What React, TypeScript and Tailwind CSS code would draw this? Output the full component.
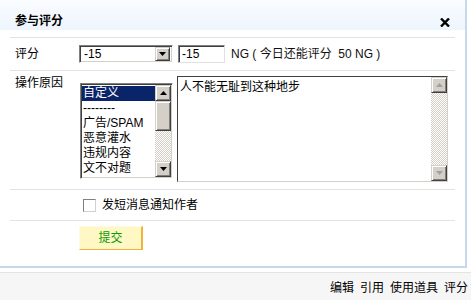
import React from "react";

const font = "font-['Liberation_Sans','Noto_Sans_CJK_SC',sans-serif]";

const Arrow = ({ dir, disabled }: { dir: "up" | "down"; disabled?: boolean }) => (
  <svg width="7" height="4" viewBox="0 0 7 4" className="block">
    {dir === "up" ? (
      <polygon points="3.5,0 7,4 0,4" fill={disabled ? "#a0a0a0" : "#000"} />
    ) : (
      <polygon points="0,0 7,0 3.5,4" fill={disabled ? "#a0a0a0" : "#000"} />
    )}
  </svg>
);

// raised classic button face
const Raised = ({
  className = "",
  children,
}: {
  className?: string;
  children?: React.ReactNode;
}) => (
  <div
    className={
      "flex items-center justify-center bg-[#d4d0c8] border border-t-[#d4d0c8] border-l-[#d4d0c8] border-r-[#404040] border-b-[#404040] shadow-[inset_1px_1px_0_#ffffff,inset_-1px_-1px_0_#808080] " +
      className
    }
  >
    {children}
  </div>
);

const Track = ({ className = "" }: { className?: string }) => (
  <div
    className={
      "bg-[image:repeating-conic-gradient(#d4d0c8_0%_25%,#ffffff_0%_50%)] bg-[length:2px_2px] " +
      className
    }
  />
);

const reasons = ["自定义", "--------", "广告/SPAM", "恶意灌水", "违规内容", "文不对题"];

export default function App() {
  return (
    <div className={`w-[471px] h-[300px] bg-white overflow-hidden text-[12px] text-black ${font}`}>
      {/* Dialog */}
      <div className="w-[467px] h-[268px] border-r-2 border-b-2 border-[#c6d8ec] bg-white">
        {/* Header */}
        <div className="h-[30px] bg-linear-to-b from-[#fafcff] to-[#edf5fd] flex items-end justify-between pl-[15px] pr-[15px] pb-[2px]">
          <span className="font-bold leading-[13px]">参与评分</span>
          <svg width="10" height="9" viewBox="0 0 10 9" className="mb-[1px]">
            <path d="M1 0.5 L9 8.5 M9 0.5 L1 8.5" stroke="#000" strokeWidth="2.4" />
          </svg>
        </div>

        <div className="mx-[10px] mt-[7px] border-t border-[#e3e3e3]">
          {/* Row: 评分 */}
          <div className="flex items-center h-[33px] border-b border-[#e3e3e3]">
            <div className="w-[69px] pl-[5px]">评分</div>
            <div className="w-[94px] h-[18px] bg-white border border-t-[#808080] border-l-[#808080] border-r-white border-b-white shadow-[inset_1px_1px_0_#404040,inset_-1px_-1px_0_#d4d0c8] flex items-center p-[2px]">
              <span className="flex-1 pl-[2px] leading-[14px]">-15</span>
              <Raised className="w-[15px] h-[14px]">
                <Arrow dir="down" />
              </Raised>
            </div>
            <div className="ml-[5px] w-[47px] h-[18px] bg-white border border-t-[#808080] border-l-[#808080] border-r-[#e0e0e0] border-b-[#e0e0e0] shadow-[inset_1px_1px_0_#404040] flex items-center pl-[3px]">
              -15
            </div>
            <span className="ml-[6px] text-[#111]">NG ( 今日还能评分&nbsp; 50 NG )</span>
          </div>

          {/* Row: 操作原因 */}
          <div className="flex items-start h-[119px] border-b border-[#e3e3e3] pt-[5px]">
            <div className="w-[70px] pl-[5px] leading-[14px]">操作原因</div>
            <div className="mt-[7px] w-[93px] h-[96px] bg-white border border-t-[#808080] border-l-[#808080] border-r-white border-b-white shadow-[inset_1px_1px_0_#404040,inset_-1px_-1px_0_#d4d0c8] p-[1px] flex">
              <div className="flex-1 overflow-hidden pt-[1px]">
                {reasons.map((r, i) => (
                  <div
                    key={r}
                    className={
                      "h-[15px] leading-[15px] pl-[1px] whitespace-nowrap " +
                      (i === 0 ? "bg-[#0a246a] text-white" : "")
                    }
                  >
                    {r}
                  </div>
                ))}
              </div>
              <div className="w-[16px] flex flex-col">
                <Raised className="h-[16px]">
                  <Arrow dir="up" />
                </Raised>
                <Raised className="h-[30px]" />
                <Track className="flex-1" />
                <Raised className="h-[16px]">
                  <Arrow dir="down" />
                </Raised>
              </div>
            </div>
            <div className="ml-[4px] w-[271px] h-[106px] bg-white border border-t-[#404040] border-l-[#404040] border-r-[#d4d0c8] border-b-[#d4d0c8] flex">
              <div className="flex-1 pl-[2px] pt-[3px] leading-[15px]">人不能无耻到这种地步</div>
              <div className="w-[16px] flex flex-col">
                <Raised className="h-[16px]">
                  <Arrow dir="up" disabled />
                </Raised>
                <Track className="flex-1" />
                <Raised className="h-[16px]">
                  <Arrow dir="down" disabled />
                </Raised>
              </div>
            </div>
          </div>

          {/* Row: checkbox */}
          <div className="flex items-center h-[31px] border-b border-[#e3e3e3]">
            <div className="w-[73px]" />
            <div className="w-[13px] h-[13px] bg-white border border-t-[#808080] border-l-[#808080] border-r-[#d4d0c8] border-b-[#d4d0c8]" />
            <span className="ml-[6px]">发短消息通知作者</span>
          </div>

          {/* Row: submit */}
          <div className="flex pt-[5px]">
            <div className="w-[69px]" />
            <button className="w-[64px] h-[24px] bg-[#fff8c4] border border-t-[#fffbe3] border-l-[#fffbe3] border-r-2 border-b-[1.5px] border-r-[#f3b23c] border-b-[#f3b23c] text-[#0b9a0b] text-[12px] leading-[20px]">
              提交
            </button>
          </div>
        </div>
      </div>

      {/* Footer */}
      <div className="mt-[4px] h-[28px] border-t border-[#e4e4e4] bg-[#f6f6f6] flex items-center justify-end pr-[3px] pt-[2px] text-[12px]">
        <span>编辑</span>
        <span className="ml-[6px]">引用</span>
        <span className="ml-[6px]">使用道具</span>
        <span className="ml-[6px]">评分</span>
      </div>
    </div>
  );
}
